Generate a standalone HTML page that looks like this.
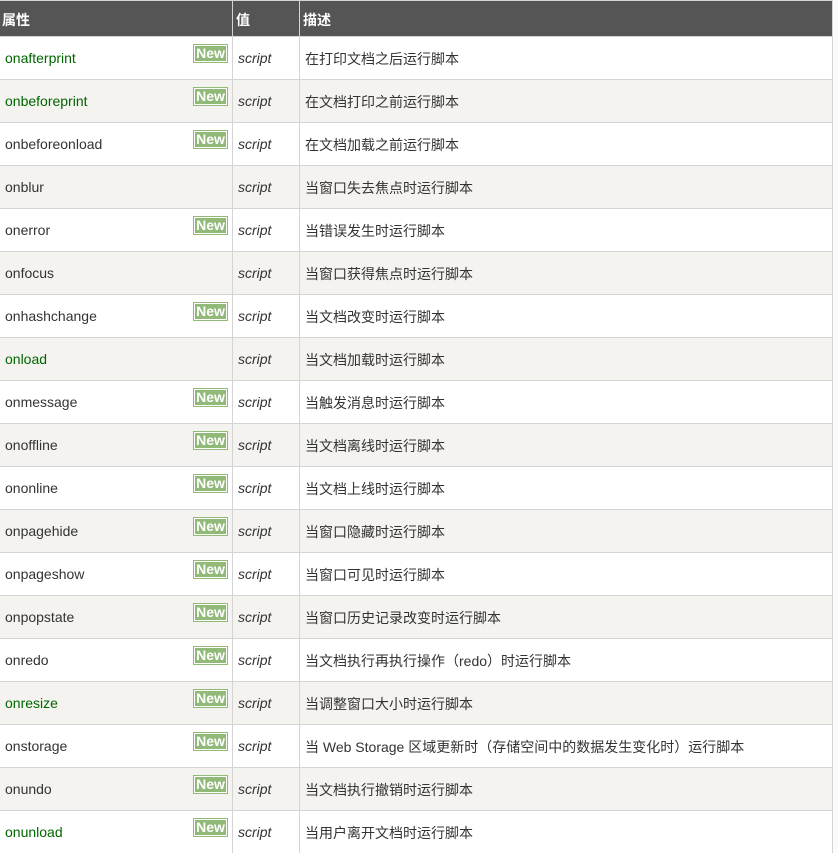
<!DOCTYPE html>
<html><head><meta charset="utf-8"><style>
*{margin:0;padding:0;box-sizing:border-box}
body{width:838px;height:853px;background:#fbfbfd;font-family:"Liberation Sans","Noto Sans CJK SC",sans-serif;font-size:14px;color:#333;position:relative;overflow:hidden}
.hd{position:absolute;left:0;top:0;width:833px;height:37px;background:#555;border-top:1px solid #d4d4d4;border-right:1px solid #d4d4d4}
.hd span{position:absolute;top:9px;color:#fff;font-weight:bold;font-size:14px}
.vl{position:absolute;top:0;width:1px;height:853px;background:#d4d4d4}
.r{position:absolute;left:0;width:833px;height:43px;border-top:1px solid #d4d4d4;border-right:1px solid #d4d4d4;background:#fff}
.r.a{background:#f4f3ef}
.r span{position:absolute;top:13px}
.n{left:5px}.g{color:#060}
.v{left:238px;font-style:italic}
.r span.d{left:305px;top:12px}
.new{position:absolute;left:193px;top:7px;width:35px;height:19px;background:#91b978;border:1px solid #91b978;box-shadow:inset 0 0 0 1px #fff;color:#fff;font-weight:bold;font-size:14px;line-height:17px;text-align:center}
</style></head><body>
<div class="hd"><span style="left:2px">属性</span><span style="left:236px">值</span><span style="left:303px">描述</span></div>
<div class="r" style="top:36px"><span class="n g">onafterprint</span><div class="new">New</div><span class="v">script</span><span class="d">在打印文档之后运行脚本</span></div>
<div class="r a" style="top:79px"><span class="n g">onbeforeprint</span><div class="new">New</div><span class="v">script</span><span class="d">在文档打印之前运行脚本</span></div>
<div class="r" style="top:122px"><span class="n">onbeforeonload</span><div class="new">New</div><span class="v">script</span><span class="d">在文档加载之前运行脚本</span></div>
<div class="r a" style="top:165px"><span class="n">onblur</span><span class="v">script</span><span class="d">当窗口失去焦点时运行脚本</span></div>
<div class="r" style="top:208px"><span class="n">onerror</span><div class="new">New</div><span class="v">script</span><span class="d">当错误发生时运行脚本</span></div>
<div class="r a" style="top:251px"><span class="n">onfocus</span><span class="v">script</span><span class="d">当窗口获得焦点时运行脚本</span></div>
<div class="r" style="top:294px"><span class="n">onhashchange</span><div class="new">New</div><span class="v">script</span><span class="d">当文档改变时运行脚本</span></div>
<div class="r a" style="top:337px"><span class="n g">onload</span><span class="v">script</span><span class="d">当文档加载时运行脚本</span></div>
<div class="r" style="top:380px"><span class="n">onmessage</span><div class="new">New</div><span class="v">script</span><span class="d">当触发消息时运行脚本</span></div>
<div class="r a" style="top:423px"><span class="n">onoffline</span><div class="new">New</div><span class="v">script</span><span class="d">当文档离线时运行脚本</span></div>
<div class="r" style="top:466px"><span class="n">ononline</span><div class="new">New</div><span class="v">script</span><span class="d">当文档上线时运行脚本</span></div>
<div class="r a" style="top:509px"><span class="n">onpagehide</span><div class="new">New</div><span class="v">script</span><span class="d">当窗口隐藏时运行脚本</span></div>
<div class="r" style="top:552px"><span class="n">onpageshow</span><div class="new">New</div><span class="v">script</span><span class="d">当窗口可见时运行脚本</span></div>
<div class="r a" style="top:595px"><span class="n">onpopstate</span><div class="new">New</div><span class="v">script</span><span class="d">当窗口历史记录改变时运行脚本</span></div>
<div class="r" style="top:638px"><span class="n">onredo</span><div class="new">New</div><span class="v">script</span><span class="d">当文档执行再执行操作（redo）时运行脚本</span></div>
<div class="r a" style="top:681px"><span class="n g">onresize</span><div class="new">New</div><span class="v">script</span><span class="d">当调整窗口大小时运行脚本</span></div>
<div class="r" style="top:724px"><span class="n">onstorage</span><div class="new">New</div><span class="v">script</span><span class="d">当 Web Storage 区域更新时（存储空间中的数据发生变化时）运行脚本</span></div>
<div class="r a" style="top:767px"><span class="n">onundo</span><div class="new">New</div><span class="v">script</span><span class="d">当文档执行撤销时运行脚本</span></div>
<div class="r" style="top:810px"><span class="n g">onunload</span><div class="new">New</div><span class="v">script</span><span class="d">当用户离开文档时运行脚本</span></div>
<div class="vl" style="left:232px"></div>
<div class="vl" style="left:299px"></div>
</body></html>
